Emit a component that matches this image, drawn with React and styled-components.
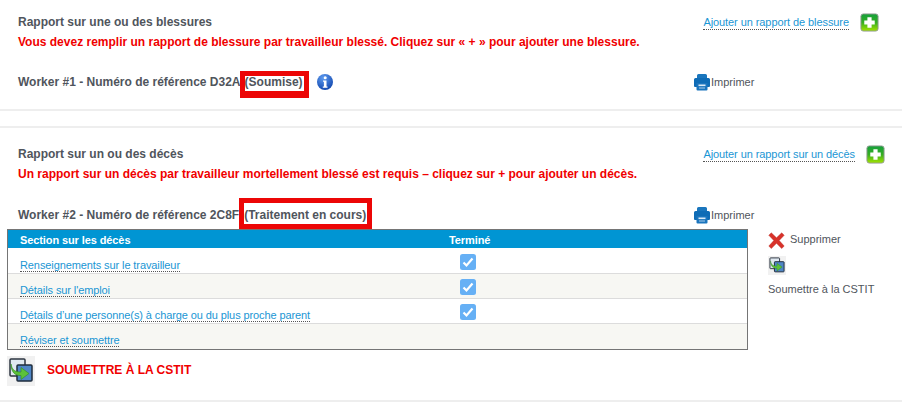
import React from 'react'
import styled, { createGlobalStyle } from 'styled-components'

const GlobalStyle = createGlobalStyle`
  html, body {
    margin: 0;
    padding: 0;
    background: #fff;
    font-family: "Liberation Sans", Arial, sans-serif;
    font-size: 12px;
    color: #50555c;
  }
`

const Page = styled.div`
  width: 902px;
  height: 409px;
  overflow: hidden;
`

const Section = styled.section`
  height: ${p => p.$height}px;
  padding: ${p => p.$top}px 17px 0 7px;
  box-sizing: border-box;
  border-top: ${p => (p.$ruled ? '2px solid #eeeeee' : 'none')};
  border-bottom: 2px solid #eeeeee;
  margin-bottom: ${p => p.$gap || 0}px;
`

const TitleRow = styled.div`
  display: flex;
  justify-content: space-between;
  align-items: flex-start;
  padding-left: 11px;
`

const Title = styled.h2`
  margin: 0;
  font-size: 12px;
  line-height: 16px;
  font-weight: bold;
  color: #50555c;
`

const Warning = styled.p`
  margin: 4px 0 0;
  font-size: 12px;
  line-height: 16px;
  font-weight: bold;
  color: #f00000;
`

const AddLink = styled.div`
  display: flex;
  align-items: flex-start;
  gap: 11px;
  margin-right: ${p => p.$inset || 0}px;
`

const LinkText = styled.a`
  color: #1a96d4;
  font-size: 11px;
  line-height: 13px;
  letter-spacing: -0.1px;
  text-decoration: none;
  border-bottom: 1px dotted #555;
`

const AddLinkText = styled(LinkText)`
  margin-top: 2px;
  letter-spacing: -0.08px;
`

const PlusWrap = styled.span`
  display: flex;
  margin-top: -1px;
`

const WorkerRow = styled.div`
  display: flex;
  align-items: center;
  height: 28px;
  margin-top: ${p => p.$top}px;
  padding-left: 11px;
`

const WorkerName = styled.div`
  width: 675px;
  flex: none;
  display: flex;
  align-items: center;
  font-size: 12px;
  font-weight: bold;
  color: #50555c;
`

const Status = styled.span`
  position: relative;
  margin-left: ${p => p.$gap}px;
`

const RedBox = styled.span`
  position: absolute;
  left: -5px;
  right: -6px;
  top: ${p => p.$top}px;
  bottom: ${p => p.$bottom}px;
  border: 5px solid #ec0606;
  border-bottom-width: ${p => p.$thick}px;
`

const InfoWrap = styled.span`
  display: flex;
  margin-left: 14px;
`

const PrintLink = styled.div`
  display: flex;
  align-items: center;
  font-size: 11px;
  color: #50555c;
`

const Body = styled.div`
  display: flex;
  align-items: flex-start;
`

const Table = styled.div`
  width: 741px;
  box-sizing: border-box;
  border: 1px solid #757575;
  flex: none;
`

const HeadRow = styled.div`
  display: grid;
  grid-template-columns: 400px 1fr;
  height: 18px;
  margin-bottom: 1px;
  background: #0095d3;
  color: #fff;
  font-size: 11px;
  font-weight: bold;
  line-height: 20px;
  letter-spacing: -0.1px;
`

const HeadCell = styled.div`
  padding-left: ${p => p.$left}px;
`

const Row = styled.div`
  display: grid;
  grid-template-columns: 400px 1fr;
  height: 25px;
  box-sizing: border-box;
  background: ${p => (p.$alt ? '#f7f7f3' : '#fff')};
  border-bottom: ${p => (p.$last ? 'none' : '1px solid #dcdcdc')};
`

const LinkCell = styled.div`
  padding: 9px 0 0 12px;
`

const CheckCell = styled.div`
  padding: 5px 0 0 52px;
`

const Actions = styled.aside`
  margin-left: 20px;
  padding-top: 3px;
  font-size: 11px;
  color: #50555c;
`

const DeleteAction = styled.div`
  display: flex;
  align-items: flex-start;
  gap: 5px;
  height: 17px;
  line-height: 14px;
`

const SubmitIcon = styled.div`
  margin-top: 7px;
  height: 20px;
`

const SubmitLabel = styled.div`
  margin-top: 6px;
  line-height: 14px;
`

const SubmitRow = styled.div`
  display: flex;
  align-items: center;
  gap: 12px;
  margin-top: 6px;
`

const SubmitText = styled.span`
  font-size: 12px;
  font-weight: bold;
  color: #f00000;
  margin-bottom: 3px;
`

const PlusIcon = () => (
  <svg width="19" height="19" viewBox="0 0 20 20">
    <defs>
      <linearGradient id="plus" x1="0" y1="0" x2="0" y2="1">
        <stop offset="0" stopColor="#14a03c" />
        <stop offset="0.5" stopColor="#36ae22" />
        <stop offset="1" stopColor="#a4e400" />
      </linearGradient>
    </defs>
    <rect x="1" y="1" width="18" height="18" rx="2.5" fill="url(#plus)" stroke="#8f9a8f" />
    <path d="M7.800 4.500h4.400v3.300h3.300v4.400h-3.300v3.300H7.800v-3.300H4.500V7.800h3.300z" fill="#fff" />
  </svg>
)

const InfoIcon = () => (
  <svg width="16" height="16" viewBox="0 0 16 16">
    <defs>
      <radialGradient id="info" cx="0.4" cy="0.25" r="0.85">
        <stop offset="0" stopColor="#5f9cf0" />
        <stop offset="1" stopColor="#0a3fa8" />
      </radialGradient>
    </defs>
    <circle cx="8" cy="8" r="8" fill="url(#info)" />
    <circle cx="8.200" cy="3.800" r="1.500" fill="#fff" />
    <path d="M6 6.500h3.500v6h1v1.200H5.800v-1.200h1.100V7.700H6z" fill="#fff" />
  </svg>
)

const PrinterIcon = () => (
  <svg width="18" height="18" viewBox="0 0 18 18">
    <path d="M5.500 1h7A1.500 1.500 0 0 1 14 2.500V6H4V2.500A1.500 1.500 0 0 1 5.500 1z" fill="#1a76bd" />
    <path d="M2.500 5h13A1.500 1.500 0 0 1 17 6.500V13a1 1 0 0 1-1 1h-2v-3.500H4V14H2a1 1 0 0 1-1-1V6.500A1.500 1.500 0 0 1 2.500 5z" fill="#0f6cb6" />
    <path d="M3.500 10h11v6.500a1 1 0 0 1-1 1h-9a1 1 0 0 1-1-1z" fill="#1b75bd" />
    <path d="M5.500 11.500h7v1.600h-7z" fill="#dcebf6" />
    <path d="M6 14.500h6v1H6z" fill="#a9cde8" />
  </svg>
)

const DeleteIcon = () => (
  <svg width="17" height="17" viewBox="0 0 17 17">
    <path d="M.800 3.300 3.300.800 8.500 5.800 13.700.800 16.200 3.300 11.200 8.500 16.200 14 13.700 16.600 8.500 11.300 3.300 16.600.800 14 5.800 8.500z" fill="#d8322a" stroke="#b52a22" strokeWidth="0.400" />
  </svg>
)

const TransferIcon = ({ width, height }) => (
  <svg width={width} height={height} viewBox="0 0 28 30" preserveAspectRatio="none">
    <rect width="28" height="30" fill="#f1f1f1" />
    <rect x="3" y="3" width="15" height="17" rx="1" fill="#dfe8f0" stroke="#2c3440" strokeWidth="1.500" />
    <rect x="10" y="9" width="15" height="16" rx="1" fill="#4f86c6" stroke="#1f2c3c" strokeWidth="1.500" />
    <path d="M4 8c1 6 4 8 10 8v-4.500l8 6-8 6v-4C8 20 4 16 4 8z" fill="#5cc13a" stroke="#2f8a20" strokeWidth="0.600" />
  </svg>
)

const CheckIcon = () => (
  <svg width="16" height="16" viewBox="0 0 16 16">
    <rect width="16" height="16" rx="2.500" fill="#66b0f5" />
    <path d="M3.500 8.500 6.500 11.500 12.500 4.500" fill="none" stroke="#fff" strokeWidth="2.200" />
  </svg>
)

const rows = [
  { label: 'Renseignements sur le travailleur', done: true },
  { label: "Détails sur l'emploi", done: true, alt: true },
  { label: 'Détails d’une personne(s) à charge ou du plus proche parent', done: true },
  { label: 'Réviser et soumettre', done: false, alt: true, last: true },
]

export default function App() {
  return (
    <Page>
      <GlobalStyle />
      <Section $height={111} $top={14} $gap={15}>
        <TitleRow>
          <div>
            <Title>Rapport sur une ou des blessures</Title>
            <Warning>Vous devez remplir un rapport de blessure par travailleur blessé. Cliquez sur « + » pour ajouter une blessure.</Warning>
          </div>
          <AddLink $inset={6}>
            <AddLinkText>Ajouter un rapport de blessure</AddLinkText>
            <PlusWrap><PlusIcon /></PlusWrap>
          </AddLink>
        </TitleRow>
        <WorkerRow $top={18}>
          <WorkerName>
            Worker #1 - Numéro de référence D32A
            <Status $gap={4}>
              (Soumise)
              <RedBox $top={-4} $bottom={-9} $thick={7} />
            </Status>
            <InfoWrap><InfoIcon /></InfoWrap>
          </WorkerName>
          <PrintLink><PrinterIcon />Imprimer</PrintLink>
        </WorkerRow>
      </Section>
      <Section $height={276} $top={18} $ruled>
        <TitleRow>
          <div>
            <Title>Rapport sur un ou des décès</Title>
            <Warning>Un rapport sur un décès par travailleur mortellement blessé est requis – cliquez sur + pour ajouter un décès.</Warning>
          </div>
          <AddLink>
            <AddLinkText>Ajouter un rapport sur un décès</AddLinkText>
            <PlusWrap><PlusIcon /></PlusWrap>
          </AddLink>
        </TitleRow>
        <WorkerRow $top={19}>
          <WorkerName>
            Worker #2 - Numéro de référence 2C8F
            <Status $gap={5}>
              (Traitement en cours)
              <RedBox $top={-10} $bottom={-7} $thick={5} />
            </Status>
          </WorkerName>
          <PrintLink><PrinterIcon />Imprimer</PrintLink>
        </WorkerRow>
        <Body>
          <Table>
            <HeadRow>
              <HeadCell $left={12}>Section sur les décès</HeadCell>
              <HeadCell $left={41}>Terminé</HeadCell>
            </HeadRow>
            {rows.map(row => (
              <Row key={row.label} $alt={row.alt} $last={row.last}>
                <LinkCell><LinkText>{row.label}</LinkText></LinkCell>
                <CheckCell>{row.done && <CheckIcon />}</CheckCell>
              </Row>
            ))}
          </Table>
          <Actions>
            <DeleteAction><DeleteIcon />Supprimer</DeleteAction>
            <SubmitIcon><TransferIcon width={18} height={19} /></SubmitIcon>
            <SubmitLabel>Soumettre à la CSTIT</SubmitLabel>
          </Actions>
        </Body>
        <SubmitRow>
          <TransferIcon width={28} height={30} />
          <SubmitText>SOUMETTRE À LA CSTIT</SubmitText>
        </SubmitRow>
      </Section>
    </Page>
  )
}
